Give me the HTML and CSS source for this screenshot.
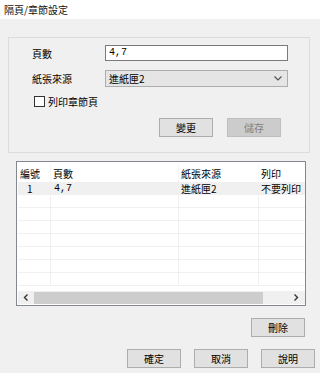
FILE: index.html
```html
<!DOCTYPE html>
<html lang="zh-Hant">
<head>
    <meta charset="UTF-8">
    <meta name="viewport" content="width=device-width, initial-scale=1.0">
    <title>隔頁/章節設定</title>
    <link rel="stylesheet" href="styles.css">
</head>
<body>
    <div class="dialog">
        <div class="titlebar">隔頁/章節設定</div>

        <div class="group">
            <div class="field">
                <label class="field-label">頁數</label>
                <div class="textbox">4,7</div>
            </div>
            <div class="field">
                <label class="field-label">紙張來源</label>
                <div class="combo">
                    <span>進紙匣2</span>
                    <svg class="chevron" width="8" height="5" viewBox="0 0 8 5">
                        <polyline points="0.5,0.5 4,4 7.5,0.5" fill="none" stroke="#555" stroke-width="1.2"/>
                    </svg>
                </div>
            </div>
            <div class="check-row">
                <span class="checkbox"></span>
                <span>列印章節頁</span>
            </div>
            <div class="group-buttons">
                <button class="btn">變更</button>
                <button class="btn" disabled>儲存</button>
            </div>
        </div>

        <div class="list">
            <div class="list-body">
                <div class="row head">
                    <div class="cell c1">編號</div>
                    <div class="cell c2">頁數</div>
                    <div class="cell c3">紙張來源</div>
                    <div class="cell c4">列印</div>
                </div>
                <div class="row item selected">
                    <div class="cell c1 num">1</div>
                    <div class="cell c2 mono">4,7</div>
                    <div class="cell c3">進紙匣2</div>
                    <div class="cell c4">不要列印</div>
                </div>
                <div class="row item"><div class="cell c1"></div><div class="cell c2"></div><div class="cell c3"></div><div class="cell c4"></div></div>
                <div class="row item"><div class="cell c1"></div><div class="cell c2"></div><div class="cell c3"></div><div class="cell c4"></div></div>
                <div class="row item"><div class="cell c1"></div><div class="cell c2"></div><div class="cell c3"></div><div class="cell c4"></div></div>
                <div class="row item"><div class="cell c1"></div><div class="cell c2"></div><div class="cell c3"></div><div class="cell c4"></div></div>
                <div class="row item"><div class="cell c1"></div><div class="cell c2"></div><div class="cell c3"></div><div class="cell c4"></div></div>
                <div class="row item"><div class="cell c1"></div><div class="cell c2"></div><div class="cell c3"></div><div class="cell c4"></div></div>
                <div class="row item"><div class="cell c1"></div><div class="cell c2"></div><div class="cell c3"></div><div class="cell c4"></div></div>
            </div>
            <div class="hscroll">
                <svg class="arrow" width="6" height="7" viewBox="0 0 6 7">
                    <polyline points="4.5,0.5 1.5,3.5 4.5,6.5" fill="none" stroke="#333" stroke-width="1.4"/>
                </svg>
                <div class="thumb"></div>
                <svg class="arrow right" width="6" height="7" viewBox="0 0 6 7">
                    <polyline points="1.5,0.5 4.5,3.5 1.5,6.5" fill="none" stroke="#333" stroke-width="1.4"/>
                </svg>
            </div>
        </div>

        <div class="delete-row">
            <button class="btn">刪除</button>
        </div>

        <div class="action-row">
            <button class="btn">確定</button>
            <button class="btn">取消</button>
            <button class="btn">說明</button>
        </div>
    </div>
</body>
</html>
```

FILE: styles.css
```css
* {
    margin: 0;
    padding: 0;
    box-sizing: border-box;
}
body {
    width: 320px;
    height: 373px;
    background: #f0f0f0;
    font-family: "Noto Sans CJK TC", "Noto Sans", sans-serif;
    font-size: 10px;
    color: #000;
    overflow: hidden;
}
.dialog {
    display: flex;
    flex-direction: column;
    height: 373px;
}
.titlebar {
    height: 19px;
    background: #fff;
    padding-left: 4px;
    line-height: 19px;
    font-size: 10px;
    color: #111;
}
.group {
    margin: 18px 0 0 8px;
    width: 302px;
    height: 116px;
    border: 1px solid #dcdcdc;
    padding: 7px 0 0 23px;
    display: flex;
    flex-direction: column;
}
.field {
    display: flex;
    align-items: center;
    margin-bottom: 9px;
}
.field-label {
    width: 73px;
}
.textbox {
    width: 183px;
    height: 16px;
    background: #fff;
    border: 1px solid #7a7a7a;
    padding-left: 3px;
    line-height: 14px;
    font-family: "Liberation Mono", monospace;
    font-size: 10px;
}
.combo {
    width: 183px;
    height: 17px;
    background: #e5e5e5;
    border: 1px solid #adadad;
    padding: 0 5px 0 3px;
    display: flex;
    align-items: center;
    justify-content: space-between;
}
.check-row {
    display: flex;
    align-items: center;
    gap: 3px;
    margin-left: 2px;
    height: 11px;
}
.checkbox {
    width: 11px;
    height: 11px;
    border: 1px solid #333;
    background: #fff;
}
.group-buttons {
    display: flex;
    gap: 14px;
    margin: 11px 0 0 127px;
}
.btn {
    width: 54px;
    height: 19px;
    background: #e1e1e1;
    border: 1px solid #adadad;
    font-family: "Noto Sans CJK TC", "Noto Sans", sans-serif;
    font-size: 10px;
    color: #000;
}
.btn:disabled {
    background: #cccccc;
    border-color: #bfbfbf;
    color: #838383;
}
.list {
    margin: 8px 0 0 16px;
    width: 290px;
    height: 145px;
    border: 1px solid #828790;
    background: #fff;
    display: flex;
    flex-direction: column;
    overflow: hidden;
}
.list-body {
    flex: 1;
    overflow: hidden;
    padding-left: 1px;
}
.row {
    display: flex;
    height: 13px;
    align-items: center;
}
.row.head {
    height: 20px;
    padding-top: 3px;
}
.cell {
    height: 100%;
    display: flex;
    align-items: center;
    padding-left: 2px;
    flex-shrink: 0;
    white-space: nowrap;
}
.c1 { width: 33px; }
.c2 { width: 128px; }
.c3 { width: 80px; }
.c4 { width: 60px; }
.item .cell {
    border-bottom: 1px solid #f0f0f0;
    border-right: 1px solid #f0f0f0;
}
.head .cell {
    border-right: 1px solid #f6f6f6;
}
.selected .cell {
    background: #f0f0f0;
    border-color: #f0f0f0;
}
.num {
    padding-left: 9px;
}
.mono {
    font-family: "Liberation Mono", monospace;
    padding-left: 3px;
}
.hscroll {
    height: 13px;
    margin: 0 0 1px 1px;
    width: 287px;
    background: #f0f0f0;
    display: flex;
    align-items: center;
}
.arrow {
    margin: 0 5px 0 5px;
}
.thumb {
    width: 229px;
    height: 12px;
    background: #cdcdcd;
}
.arrow.right {
    margin-left: auto;
    margin-right: 6px;
}
.delete-row {
    display: flex;
    justify-content: flex-end;
    margin: 12px 15px 0 0;
}
.action-row {
    display: flex;
    justify-content: flex-end;
    gap: 13px;
    margin: 12px 5px 0 0;
}
```
